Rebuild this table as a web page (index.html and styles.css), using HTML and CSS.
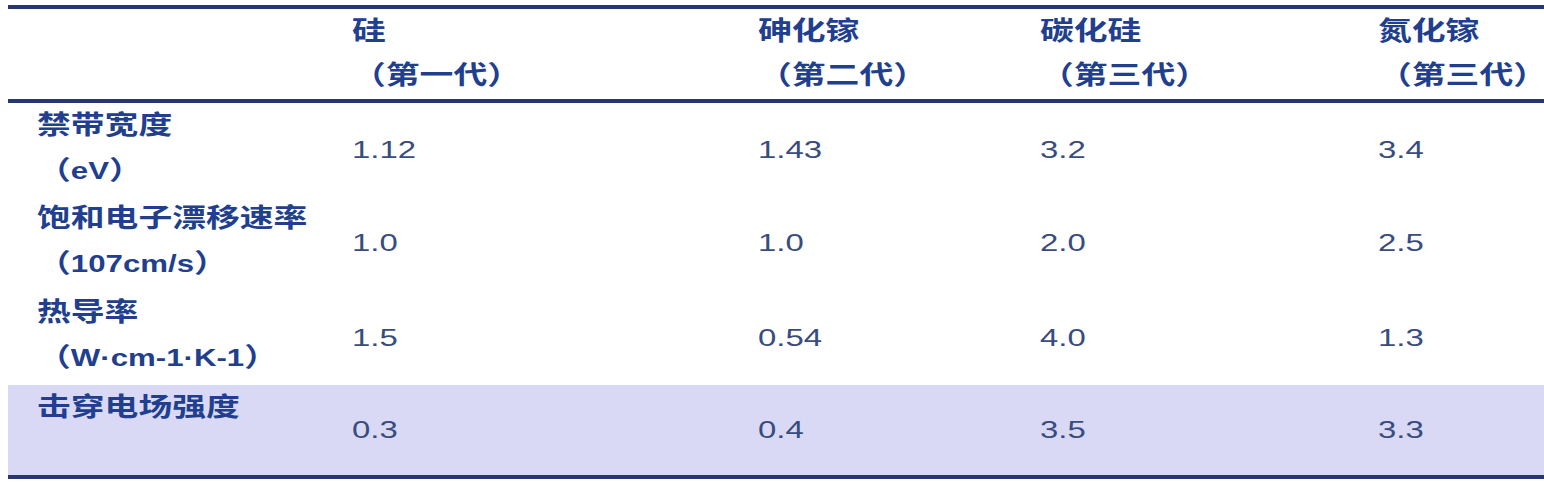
FILE: index.html
```html
<!DOCTYPE html>
<html lang="zh-CN">
<head>
<meta charset="utf-8">
<title>半导体材料对比</title>
<link rel="stylesheet" href="styles.css">
</head>
<body>
<div class="table">
  <div class="row head">
    <div class="cell"></div>
    <div class="cell"><span class="t">硅<br>（第一代）</span></div>
    <div class="cell"><span class="t">砷化镓<br>（第二代）</span></div>
    <div class="cell"><span class="t">碳化硅<br>（第三代）</span></div>
    <div class="cell"><span class="t">氮化镓<br>（第三代）</span></div>
  </div>
  <div class="row r1">
    <div class="cell label"><span class="t">禁带宽度<br>（<span class="lat">eV</span>）</span></div>
    <div class="cell val"><span class="v">1.12</span></div>
    <div class="cell val"><span class="v">1.43</span></div>
    <div class="cell val"><span class="v">3.2</span></div>
    <div class="cell val"><span class="v">3.4</span></div>
  </div>
  <div class="row r2">
    <div class="cell label"><span class="t">饱和电子漂移速率<br>（<span class="lat">107cm/s</span>）</span></div>
    <div class="cell val"><span class="v">1.0</span></div>
    <div class="cell val"><span class="v">1.0</span></div>
    <div class="cell val"><span class="v">2.0</span></div>
    <div class="cell val"><span class="v">2.5</span></div>
  </div>
  <div class="row r3">
    <div class="cell label"><span class="t">热导率<br>（<span class="lat">W·cm-1·K-1</span>）</span></div>
    <div class="cell val"><span class="v">1.5</span></div>
    <div class="cell val"><span class="v">0.54</span></div>
    <div class="cell val"><span class="v">4.0</span></div>
    <div class="cell val"><span class="v">1.3</span></div>
  </div>
  <div class="row r4">
    <div class="cell label"><span class="t">击穿电场强度</span></div>
    <div class="cell val"><span class="v">0.3</span></div>
    <div class="cell val"><span class="v">0.4</span></div>
    <div class="cell val"><span class="v">3.5</span></div>
    <div class="cell val"><span class="v">3.3</span></div>
  </div>
</div>
</body>
</html>
```

FILE: styles.css
```css
html, body {
  margin: 0;
  padding: 0;
  background: #ffffff;
}

body {
  width: 1544px;
  height: 490px;
  overflow: hidden;
}

.table {
  margin-top: 5px;
  margin-left: 8px;
  border-top: 4px solid #26386f;
  border-bottom: 4px solid #26386f;
}

.row {
  display: grid;
  grid-template-columns: 344px 406px 282px 338px 1fr;
}

.head {
  height: 90px;
  border-bottom: 4px solid #26386f;
}

.r1 { height: 93px; }
.r2 { height: 94px; }
.r3 { height: 95px; }
.r4 { height: 90px; background: #d9d9f6; }

.cell {
  display: flex;
  align-items: flex-start;
}

.label {
  padding-left: 29px;
}

.val {
  align-items: center;
}

.t {
  display: inline-block;
  font-family: "Liberation Sans", "Noto Sans CJK SC", sans-serif;
  font-size: 26px;
  font-weight: 700;
  line-height: 45px;
  color: #213f8e;
  white-space: nowrap;
  transform: scaleX(1.3);
  transform-origin: left center;
}

.head .t {
  line-height: 44px;
}

.lat {
  font-size: 24px;
}

.v {
  display: inline-block;
  font-family: "Liberation Sans", Arial, sans-serif;
  font-size: 24px;
  font-weight: 400;
  color: #384c7e;
  white-space: nowrap;
  transform: scaleX(1.37);
  transform-origin: left center;
}
```
